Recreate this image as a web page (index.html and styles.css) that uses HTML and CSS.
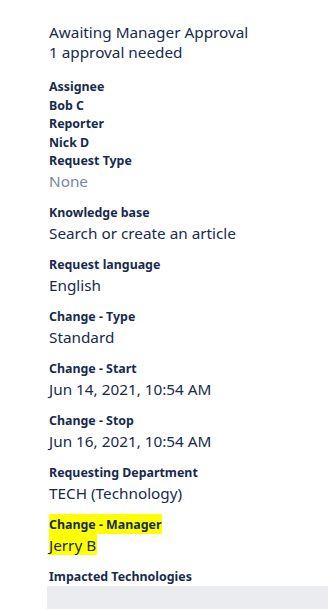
FILE: index.html
```html
<!DOCTYPE html>
<html lang="en">
<head>
    <meta charset="UTF-8">
    <meta name="viewport" content="width=device-width, initial-scale=1.0">
    <title>Request details</title>
    <link rel="stylesheet" href="styles.css">
</head>
<body>
    <div class="details">
        <div class="status">
            <div>Awaiting Manager Approval</div>
            <div>1 approval needed</div>
        </div>

        <div class="people">
            <div class="label">Assignee</div>
            <div class="label">Bob C</div>
            <div class="label">Reporter</div>
            <div class="label">Nick D</div>
            <div class="label">Request Type</div>
            <div class="value muted">None</div>
        </div>

        <div class="field">
            <div class="label">Knowledge base</div>
            <div class="value">Search or create an article</div>
        </div>

        <div class="field">
            <div class="label">Request language</div>
            <div class="value">English</div>
        </div>

        <div class="field">
            <div class="label">Change - Type</div>
            <div class="value">Standard</div>
        </div>

        <div class="field">
            <div class="label">Change - Start</div>
            <div class="value">Jun 14, 2021, 10:54 AM</div>
        </div>

        <div class="field">
            <div class="label">Change - Stop</div>
            <div class="value">Jun 16, 2021, 10:54 AM</div>
        </div>

        <div class="field">
            <div class="label">Requesting Department</div>
            <div class="value">TECH (Technology)</div>
        </div>

        <div class="field">
            <div class="label"><span class="mark">Change - Manager</span></div>
            <div class="value"><span class="mark">Jerry B</span></div>
        </div>

        <div class="field last">
            <div class="label">Impacted Technologies</div>
            <div class="empty-box"></div>
        </div>
    </div>
</body>
</html>
```

FILE: styles.css
```css
body {
    margin: 0;
    padding: 0;
    background-color: #fff;
    font-family: "Noto Sans", "Open Sans", Arial, sans-serif;
    color: #172b4d;
}
.details {
    padding: 22px 0 0 49px;
}
.status {
    font-size: 15.3px;
    line-height: 20px;
    margin-bottom: 16px;
}
.people {
    margin-bottom: 13.5px;
}
.label {
    font-size: 12.4px;
    font-weight: 700;
    line-height: 18.5px;
}
.value {
    font-size: 15.3px;
    line-height: 20px;
}
.muted {
    color: #7a869a;
}
.field {
    margin-bottom: 13.5px;
}
.field.last {
    margin-bottom: 0;
}
.mark {
    background-color: #ffff00;
}
.label .mark {
    padding: 2px 1px 1px 0;
}
.value .mark {
    padding: 1px 1px 0 0;
}
.empty-box {
    margin: -1px 0 0 -2px;
    height: 23px;
    background-color: #ebecf0;
}
```
